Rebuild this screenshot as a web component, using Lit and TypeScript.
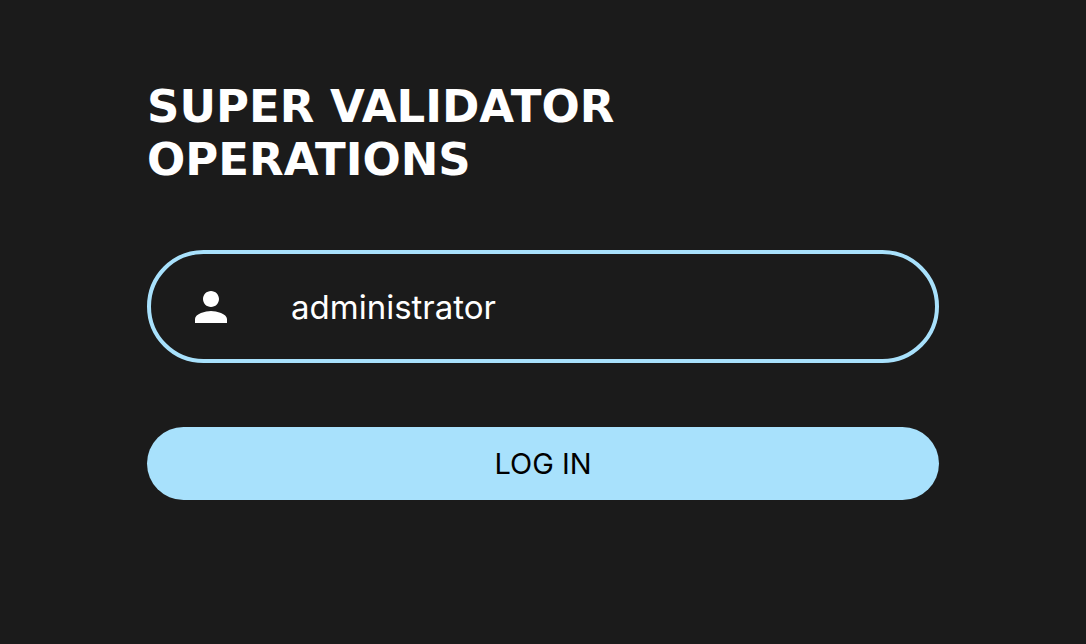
import { LitElement, html, css } from "lit";
import { customElement, state } from "lit/decorators.js";

@customElement("app-root")
export class AppRoot extends LitElement {
  static styles = css`
    :host {
      display: block;
      min-height: 100vh;
      background: #1b1b1b;
      color: #fff;
      font-family: Inter, sans-serif;
    }
    *,
    *::before {
      box-sizing: border-box;
    }
    .login {
      display: flex;
      flex-direction: column;
      gap: 64px;
      max-width: 856px;
      margin: 0 auto;
      padding: 80px 32px;
    }
    .title {
      margin: 0;
      font-family: "DejaVu Sans", sans-serif;
      font-size: 45px;
      line-height: 53px;
      font-weight: 700;
      text-transform: uppercase;
    }
    .field {
      display: flex;
      align-items: center;
      gap: 56px;
      height: 113px;
      padding: 0 36px;
      border: 4px solid #a8e1fc;
      border-radius: 57px;
    }
    .icon {
      flex: none;
      width: 48px;
      height: 48px;
      fill: #fff;
    }
    .input {
      flex: 1;
      min-width: 0;
      padding: 0;
      border: 0;
      outline: 0;
      background: transparent;
      color: inherit;
      font: 400 33px/48px Inter, sans-serif;
    }
    .button {
      height: 73px;
      border: 0;
      border-radius: 37px;
      background: #a8e1fc;
      color: #000;
      font: 400 29px/40px Inter, sans-serif;
      text-transform: uppercase;
      cursor: pointer;
    }
  `;

  @state() private user = "administrator";

  private onInput(e: Event) {
    this.user = (e.target as HTMLInputElement).value;
  }

  render() {
    return html`
      <form class="login" @submit=${(e: Event) => e.preventDefault()}>
        <h1 class="title">Super Validator<br />Operations</h1>
        <label class="field">
          <svg class="icon" viewBox="0 0 24 24" aria-hidden="true">
            <path d="M12 12c2.21 0 4-1.79 4-4s-1.79-4-4-4-4 1.79-4 4 1.79 4 4 4zm0 2c-2.67 0-8 1.34-8 4v2h16v-2c0-2.66-5.33-4-8-4z" />
          </svg>
          <input class="input" type="text" aria-label="Username" .value=${this.user} @input=${this.onInput} />
        </label>
        <button class="button" type="submit">Log In</button>
      </form>
    `;
  }
}
